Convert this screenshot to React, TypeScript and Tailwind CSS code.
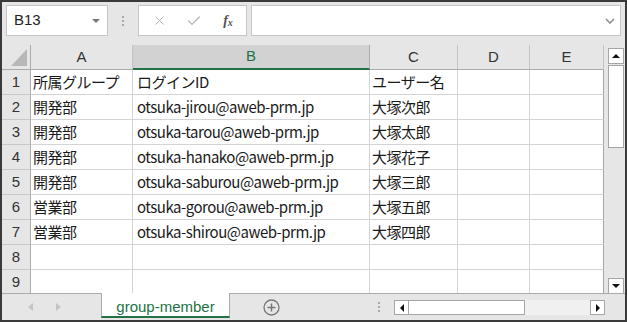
import { X, Check } from "lucide-react";

const cols = [
  { key: "A", w: "w-[102px]" },
  { key: "B", w: "w-[237px]" },
  { key: "C", w: "w-[88px]" },
  { key: "D", w: "w-[72px]" },
  { key: "E", w: "w-[74px]" },
];

const rows = [
  ["所属グループ", "ログインID", "ユーザー名"],
  ["開発部", "otsuka-jirou@aweb-prm.jp", "大塚次郎"],
  ["開発部", "otsuka-tarou@aweb-prm.jp", "大塚太郎"],
  ["開発部", "otsuka-hanako@aweb-prm.jp", "大塚花子"],
  ["開発部", "otsuka-saburou@aweb-prm.jp", "大塚三郎"],
  ["営業部", "otsuka-gorou@aweb-prm.jp", "大塚五郎"],
  ["営業部", "otsuka-shirou@aweb-prm.jp", "大塚四郎"],
  ["", "", ""],
  ["", "", ""],
];

const cellFont = { fontFamily: '"Noto Sans CJK JP", "Noto Sans", sans-serif' };
const uiFont = { fontFamily: '"Liberation Sans", Arial, sans-serif' };

export default function App() {
  return (
    <div className="w-[627px] h-[322px] overflow-hidden border-2 border-[#3a3a3a] bg-[#e6e6e6] flex flex-col" style={uiFont}>
      {/* Name box + formula bar */}
      <div className="h-[43px] flex items-start pt-[3px] pl-[4px] pr-[4px] shrink-0">
        <div className="w-[102px] h-[31px] bg-white border border-[#c6c6c6] flex items-center justify-between pl-[7px] pr-[7px]">
          <span className="text-[15px] text-[#222]">B13</span>
          <span className="w-0 h-0 border-l-[4px] border-r-[4px] border-t-[4px] border-l-transparent border-r-transparent border-t-[#777]" />
        </div>
        <div className="w-[30px] h-[31px] flex flex-col items-center justify-center gap-[2px]">
          <span className="w-[2px] h-[2px] bg-[#a8a8a8]" />
          <span className="w-[2px] h-[2px] bg-[#a8a8a8]" />
          <span className="w-[2px] h-[2px] bg-[#a8a8a8]" />
        </div>
        <div className="w-[109px] h-[31px] bg-white border border-[#c6c6c6] flex items-center">
          <div className="w-[38px] flex justify-center pl-[2px]">
            <X size={15} strokeWidth={1.6} color="#b4b4b4" />
          </div>
          <div className="w-[34px] flex justify-center">
            <Check size={16} strokeWidth={1.8} color="#b4b4b4" />
          </div>
          <div className="w-[34px] flex justify-center text-[#555] italic font-semibold text-[14px]" style={{ fontFamily: '"Liberation Serif", serif' }}>
            f<span className="text-[10px] mt-[5px]">x</span>
          </div>
        </div>
        <div className="ml-[4px] flex-1 h-[31px] bg-white border border-[#c6c6c6] flex items-center justify-end pr-[5px]">
          <svg width="10" height="6" viewBox="0 0 10 6">
            <path d="M1 1 L5 5 L9 1" fill="none" stroke="#8a8a8a" strokeWidth="1.5" />
          </svg>
        </div>
      </div>

      {/* Grid */}
      <div className="h-[248px] flex shrink-0">
        <div className="w-[602px] h-[248px] overflow-hidden bg-white">
          {/* Column header */}
          <div className="flex h-[25px]">
            <div className="w-[29px] h-[25px] bg-[#e6e6e6] border-r border-b border-[#ababab] flex items-end justify-end pr-[3px] pb-[3px]">
              <svg width="16" height="17" viewBox="0 0 16 17">
                <path d="M16 0 L16 17 L0 17 Z" fill="#b8b8b8" />
              </svg>
            </div>
            {cols.map((c) =>
              c.key === "B" ? (
                <div key={c.key} className={`${c.w} h-[25px] bg-[#d2d2d2] border-r border-[#ababab] border-b-2 border-b-[#217346] flex items-center justify-center text-[15px] text-[#217346]`}>
                  {c.key}
                </div>
              ) : (
                <div key={c.key} className={`${c.w} h-[25px] bg-[#e6e6e6] border-r border-[#c4c4c4] border-b border-b-[#ababab] flex items-center justify-center text-[15px] text-[#333]`}>
                  {c.key}
                </div>
              )
            )}
          </div>
          {/* Rows */}
          {rows.map((r, i) => (
            <div key={i} className="flex h-[25px]">
              <div className="w-[29px] h-[25px] bg-[#e6e6e6] border-r border-[#ababab] border-b border-b-[#c8c8c8] flex items-center justify-center text-[15px] text-[#333]">
                {i + 1}
              </div>
              {cols.map((c, j) => (
                <div key={c.key} className={`${c.w} h-[25px] border-r border-b border-[#d4d4d4] flex items-center text-[15px] tracking-[-0.5px] text-[#1a1a1a] whitespace-nowrap overflow-hidden ${j === 1 ? "pl-[4px]" : "pl-[2px]"} ${j === 4 ? "border-r-[#a6a6a6]" : ""}`} style={cellFont}>
                  {j < 3 ? r[j] : ""}
                </div>
              ))}
            </div>
          ))}
        </div>
        {/* Vertical scrollbar */}
        <div className="w-[21px] h-[248px] flex flex-col pl-[4px] pt-[3px]">
          <div className="w-[16px] h-[16px] bg-white border border-[#a6a6a6] flex items-center justify-center">
            <span className="w-0 h-0 border-l-[4px] border-r-[4px] border-b-[4px] border-l-transparent border-r-transparent border-b-[#111]" />
          </div>
          <div className="w-[16px] h-[83px] mt-[1px] bg-white border border-[#a6a6a6]" />
          <div className="flex-1" />
          <div className="w-[16px] h-[16px] mb-[-1px] bg-white border border-[#a6a6a6] flex items-center justify-center">
            <span className="w-0 h-0 border-l-[4px] border-r-[4px] border-t-[4px] border-l-transparent border-r-transparent border-t-[#111]" />
          </div>
        </div>
      </div>

      {/* Sheet tabs + horizontal scrollbar */}
      <div className="h-[27px] flex items-start border-t border-[#ababab] shrink-0">
        <div className="w-[99px] h-[26px] flex items-center">
          <span className="ml-[26px] w-0 h-0 border-t-[4px] border-b-[4px] border-r-[5px] border-t-transparent border-b-transparent border-r-[#c4c4c4]" />
          <span className="ml-[23px] w-0 h-0 border-t-[4px] border-b-[4px] border-l-[5px] border-t-transparent border-b-transparent border-l-[#c4c4c4]" />
        </div>
        <div className="w-[129px] h-[25px] -mt-[1px] pt-[5px] bg-white border-l border-r border-[#ababab] border-b-2 border-b-[#217346] flex items-center justify-center text-[15px] text-[#217346]">
          group-member
        </div>
        <div className="w-[82px] h-[26px] flex items-center justify-center">
          <svg width="17" height="17" viewBox="0 0 17 17">
            <circle cx="8.5" cy="8.5" r="7.5" fill="none" stroke="#777" strokeWidth="1.3" />
            <path d="M8.5 4.5 V12.5 M4.5 8.5 H12.5" stroke="#777" strokeWidth="1.5" />
          </svg>
        </div>
        <div className="w-[82px] h-[26px] flex flex-col justify-center gap-[2px] pl-[66px]">
          <span className="w-[2px] h-[2px] bg-[#a8a8a8]" />
          <span className="w-[2px] h-[2px] bg-[#a8a8a8]" />
          <span className="w-[2px] h-[2px] bg-[#a8a8a8]" />
        </div>
        <div className="flex mt-[6px] h-[15px]">
          <div className="w-[15px] h-[15px] bg-white border border-[#a6a6a6] flex items-center justify-center">
            <span className="w-0 h-0 border-t-[4px] border-b-[4px] border-r-[4px] border-t-transparent border-b-transparent border-r-[#111]" />
          </div>
          <div className="w-[117px] h-[15px] bg-white border border-[#a6a6a6] -ml-[1px]" />
          <div className="w-[65px] h-[15px] bg-[#f0f0f0]" />
          <div className="w-[15px] h-[15px] bg-white border border-[#a6a6a6] flex items-center justify-center">
            <span className="w-0 h-0 border-t-[4px] border-b-[4px] border-l-[4px] border-t-transparent border-b-transparent border-l-[#111]" />
          </div>
        </div>
      </div>
    </div>
  );
}
